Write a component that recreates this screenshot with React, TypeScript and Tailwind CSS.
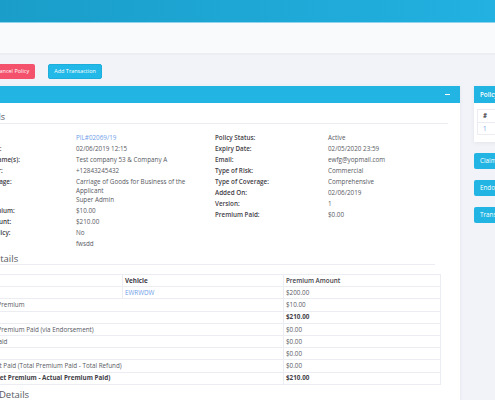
import React from "react";

const L = "text-[#3f4047] font-semibold";
const V = "text-[#575962]";

function Row({ label, children, lw }: { label: string; children: React.ReactNode; lw: string }) {
  return (
    <div className="flex py-[1px] leading-[9px]">
      <div className={`${lw} shrink-0 whitespace-nowrap ${L}`}>{label}</div>
      <div className={`${V} whitespace-nowrap`}>{children}</div>
    </div>
  );
}

function TRow({ c1, c2, c3, bold, span, head }: { c1: string; c2?: React.ReactNode; c3: string; bold?: boolean; span?: boolean; head?: boolean }) {
  return (
    <div className={`flex h-[12.2px] items-center border-t border-[#ebedf2] ${bold ? "font-bold text-[#3f4047]" : "text-[#575962]"}`}>
      {span ? (
        <div className="w-[320px] shrink-0 pl-[3px] whitespace-nowrap">{c1}</div>
      ) : (
        <>
          <div className="w-[160px] shrink-0 pl-[3px] h-full flex items-center border-r border-[#ebedf2] whitespace-nowrap">{c1}</div>
          <div className="w-[160px] shrink-0 pl-[2px] whitespace-nowrap">{c2}</div>
        </>
      )}
      <div className={`flex-1 pl-[2px] h-full flex items-center border-l border-[#ebedf2] whitespace-nowrap ${head ? "font-semibold text-[#3f4047]" : ""}`}>{c3}</div>
    </div>
  );
}

export default function App() {
  return (
    <div className="w-[495px] h-[400px] overflow-hidden bg-[#f2f3f8] text-[6.3px]" style={{ fontFamily: '"Open Sans", "Liberation Sans", sans-serif' }}>
      <div className="h-[23px] bg-gradient-to-r from-[#1a9dc9] to-[#22b1e1] border-b border-[#8fd3ec]" />
      <div className="h-[32px] bg-[#f9fafc] border-b-2 border-[#eceef3]" />
      <div className="flex items-center gap-[13px] pt-[9px] ml-[-10px] text-[5.5px]">
        <div className="h-[15px] px-[6px] flex items-center rounded-[2px] bg-[#f4516c] text-white whitespace-nowrap">Cancel Policy</div>
        <div className="h-[15px] px-[5px] flex items-center rounded-[2px] bg-[#22b9e8] border border-[#1eaedc] text-white whitespace-nowrap">Add Transaction</div>
      </div>
      <div className="flex mt-[7px] ml-[-50px] gap-[14px]">
        <div className="w-[510px] shrink-0 shadow-[0_1px_4px_rgba(69,65,78,0.08)]">
          <div className="h-[17px] bg-[#22b5e3] flex items-center justify-end pr-[10px]">
            <div className="w-[5px] h-[1.5px] bg-white" />
          </div>
          <div className="bg-white px-[12px] pt-[8px] h-[320px]">
            <div className="ml-[-12px] text-[9px] leading-[12px] text-[#575962] border-b border-[#ebedf2]">Policy Details</div>
            <div className="flex mt-[8px]">
              <div className="w-[253px] shrink-0 pl-[6px]">
                <Row lw="w-[108px]" label="Policy No:"><span className="text-[#6f9ee9]">PIL#02069/19</span></Row>
                <Row lw="w-[108px]" label="Issue Date:">02/06/2019 12:15</Row>
                <Row lw="w-[108px]" label="Insured Name(s):">Test company 53 &amp; Company A</Row>
                <Row lw="w-[108px]" label="Contact Nr:">+12843245432</Row>
                <Row lw="w-[108px]" label="Vehicle Usage:">
                  <div>Carriage of Goods for Business of the</div>
                  <div>Applicant</div>
                  <div>Super Admin</div>
                </Row>
                <Row lw="w-[108px]" label="Total Premium:">$10.00</Row>
                <Row lw="w-[108px]" label="Total Amount:">$210.00</Row>
                <Row lw="w-[108px]" label="Is Fleet Policy:">No</Row>
                <Row lw="w-[108px]" label="Notes:">fwsdd</Row>
              </div>
              <div className="w-[233px] shrink-0">
                <Row lw="w-[113px]" label="Policy Status:">Active</Row>
                <Row lw="w-[113px]" label="Expiry Date:">02/05/2020 23:59</Row>
                <Row lw="w-[113px]" label="Email:">ewfg@yopmail.com</Row>
                <Row lw="w-[113px]" label="Type of Risk:">Commercial</Row>
                <Row lw="w-[113px]" label="Type of Coverage:">Comprehensive</Row>
                <Row lw="w-[113px]" label="Added On:">02/06/2019</Row>
                <Row lw="w-[113px]" label="Version:">1</Row>
                <Row lw="w-[113px]" label="Premium Paid:">$0.00</Row>
              </div>
            </div>
            <div className="mt-[5px] ml-[-8px] mr-[13px] text-[9.5px] leading-[10px] text-[#575962] border-b border-[#ebedf2]">Vehicle Details</div>
            <div className="mt-[9px] w-[479px] border-x border-b border-[#ebedf2]">
              <TRow head c1="#" c2={<span className="font-bold text-[#3f4047]">Vehicle</span>} c3="Premium Amount" />
              <TRow c1="1" c2={<span className="text-[#6f9ee9]">EWRWDW</span>} c3="$200.00" />
              <TRow span c1="Additional Premium" c3="$10.00" />
              <TRow span bold c1="Total" c3="$210.00" />
              <TRow span c1="Additional Premium Paid (via Endorsement)" c3="$0.00" />
              <TRow span c1="Premium Paid" c3="$0.00" />
              <TRow span c1="Refund" c3="$0.00" />
              <TRow span c1="Net Amount Paid (Total Premium Paid - Total Refund)" c3="$0.00" />
              <TRow span bold c1="Balance (Net Premium - Actual Premium Paid)" c3="$210.00" />
            </div>
            <div className="mt-[4px] ml-[-9px] mr-[13px] text-[9.5px] leading-[11px] text-[#575962] border-b border-[#ebedf2]">Customer Details</div>
          </div>
        </div>
        <div className="w-[80px] shrink-0">
          <div className="shadow-[0_1px_4px_rgba(69,65,78,0.08)]">
            <div className="h-[17px] bg-[#22b5e3] flex items-center pl-[6px] text-white font-semibold whitespace-nowrap">Policy Vehicles</div>
            <div className="bg-white pt-[6px] pb-[7px] pl-[3px]">
              <div className="border border-[#ebedf2]">
                <div className="h-[12px] flex items-center pl-[5px] font-bold text-[#3f4047]">#</div>
                <div className="h-[12px] flex items-center pl-[5px] border-t border-[#ebedf2] text-[#6f9ee9]">1</div>
              </div>
            </div>
          </div>
          <div className="mt-[11px] flex flex-col gap-[11px]">
            <div className="h-[16px] rounded-[2px] bg-[#22b5e3] text-white flex items-center pl-[6px] whitespace-nowrap">Claims</div>
            <div className="h-[16px] rounded-[2px] bg-[#22b5e3] text-white flex items-center pl-[6px] whitespace-nowrap">Endorsements</div>
            <div className="h-[16px] rounded-[2px] bg-[#22b5e3] text-white flex items-center pl-[6px] whitespace-nowrap">Transactions</div>
          </div>
        </div>
      </div>
    </div>
  );
}
